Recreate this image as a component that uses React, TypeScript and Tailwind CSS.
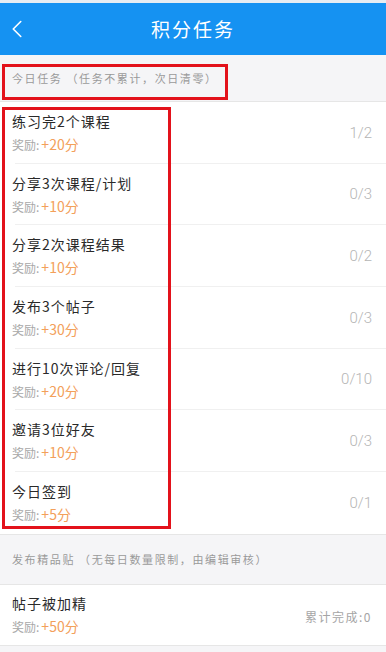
import { ChevronLeft } from "lucide-react";

const font = { fontFamily: '"Noto Sans CJK SC", "Noto Sans", sans-serif' };

type Task = { title: string; points: number; progress: string };

const dailyTasks: Task[] = [
  { title: "练习完2个课程", points: 20, progress: "1/2" },
  { title: "分享3次课程/计划", points: 10, progress: "0/3" },
  { title: "分享2次课程结果", points: 10, progress: "0/2" },
  { title: "发布3个帖子", points: 30, progress: "0/3" },
  { title: "进行10次评论/回复", points: 20, progress: "0/10" },
  { title: "邀请3位好友", points: 10, progress: "0/3" },
  { title: "今日签到", points: 5, progress: "0/1" },
];

const Reward = ({ points }: { points: number }) => (
  <div className="mt-[3px] flex items-baseline leading-[20px]">
    <span className="text-[12px] text-[#a8a8a8]">奖励:</span>
    <span className="ml-[2px] text-[14px] text-[#f3a05a]">+{points}分</span>
  </div>
);

const TaskRow = ({ task, last }: { task: Task; last?: boolean }) => (
  <div className="relative flex h-[61.7px] items-center justify-between bg-white pl-3 pr-[14px]">
    <div className="flex flex-col">
      <div className="text-[14px] leading-[20px] tracking-[1px] text-[#2a2a2a]">{task.title}</div>
      <Reward points={task.points} />
    </div>
    <div className="font-['Roboto'] text-[15px] font-light text-[#b5b5b5]">{task.progress}</div>
    {!last && <div className="absolute bottom-0 left-[15px] right-0 h-px bg-[#f0f0f0]" />}
  </div>
);

const SectionHeader = ({ text, h }: { text: string; h: string }) => (
  <div className={`flex items-center border-b border-[#e6e6e6] bg-[#f5f5f7] pl-3 ${h}`}>
    <span className="text-[11px] tracking-[1.6px] text-[#9a9a9a]">{text}</span>
  </div>
);

export default function App() {
  return (
    <div className="relative h-[652px] w-[386px] overflow-hidden bg-[#f5f5f7]" style={font}>
      <div className="h-[3px] bg-[#e6edf3]" />
      <div className="relative flex h-[52px] items-center justify-center bg-[#1592f2]">
        <ChevronLeft className="absolute left-[2px] top-[11px] text-white" size={30} strokeWidth={1.3} />
        <span className="text-[19px] tracking-[2px] text-white">积分任务</span>
      </div>

      <SectionHeader text="今日任务 （任务不累计，次日清零）" h="h-[47px]" />
      <div className="border-b border-[#e6e6e6]">
        {dailyTasks.map((t, i) => (
          <TaskRow key={t.title} task={t} last={i === dailyTasks.length - 1} />
        ))}
      </div>

      <SectionHeader text="发布精品贴 （无每日数量限制，由编辑审核）" h="h-[50px]" />
      <div className="flex h-[61px] items-center justify-between border-b border-[#e6e6e6] bg-white pl-3 pr-[14px]">
        <div className="flex flex-col">
          <div className="text-[14px] leading-[20px] tracking-[1px] text-[#2a2a2a]">帖子被加精</div>
          <Reward points={50} />
        </div>
        <div className="mt-[4px] text-[12px] tracking-[1.5px] text-[#a5a5a5]">累计完成:0</div>
      </div>

      {/* annotation boxes */}
      <div className="pointer-events-none absolute left-[2px] top-[64px] h-[36px] w-[226px] border-[3px] border-[#e3121b]" />
      <div className="pointer-events-none absolute left-[2px] top-[107px] h-[422px] w-[169px] border-[3px] border-[#e3121b]" />
    </div>
  );
}
